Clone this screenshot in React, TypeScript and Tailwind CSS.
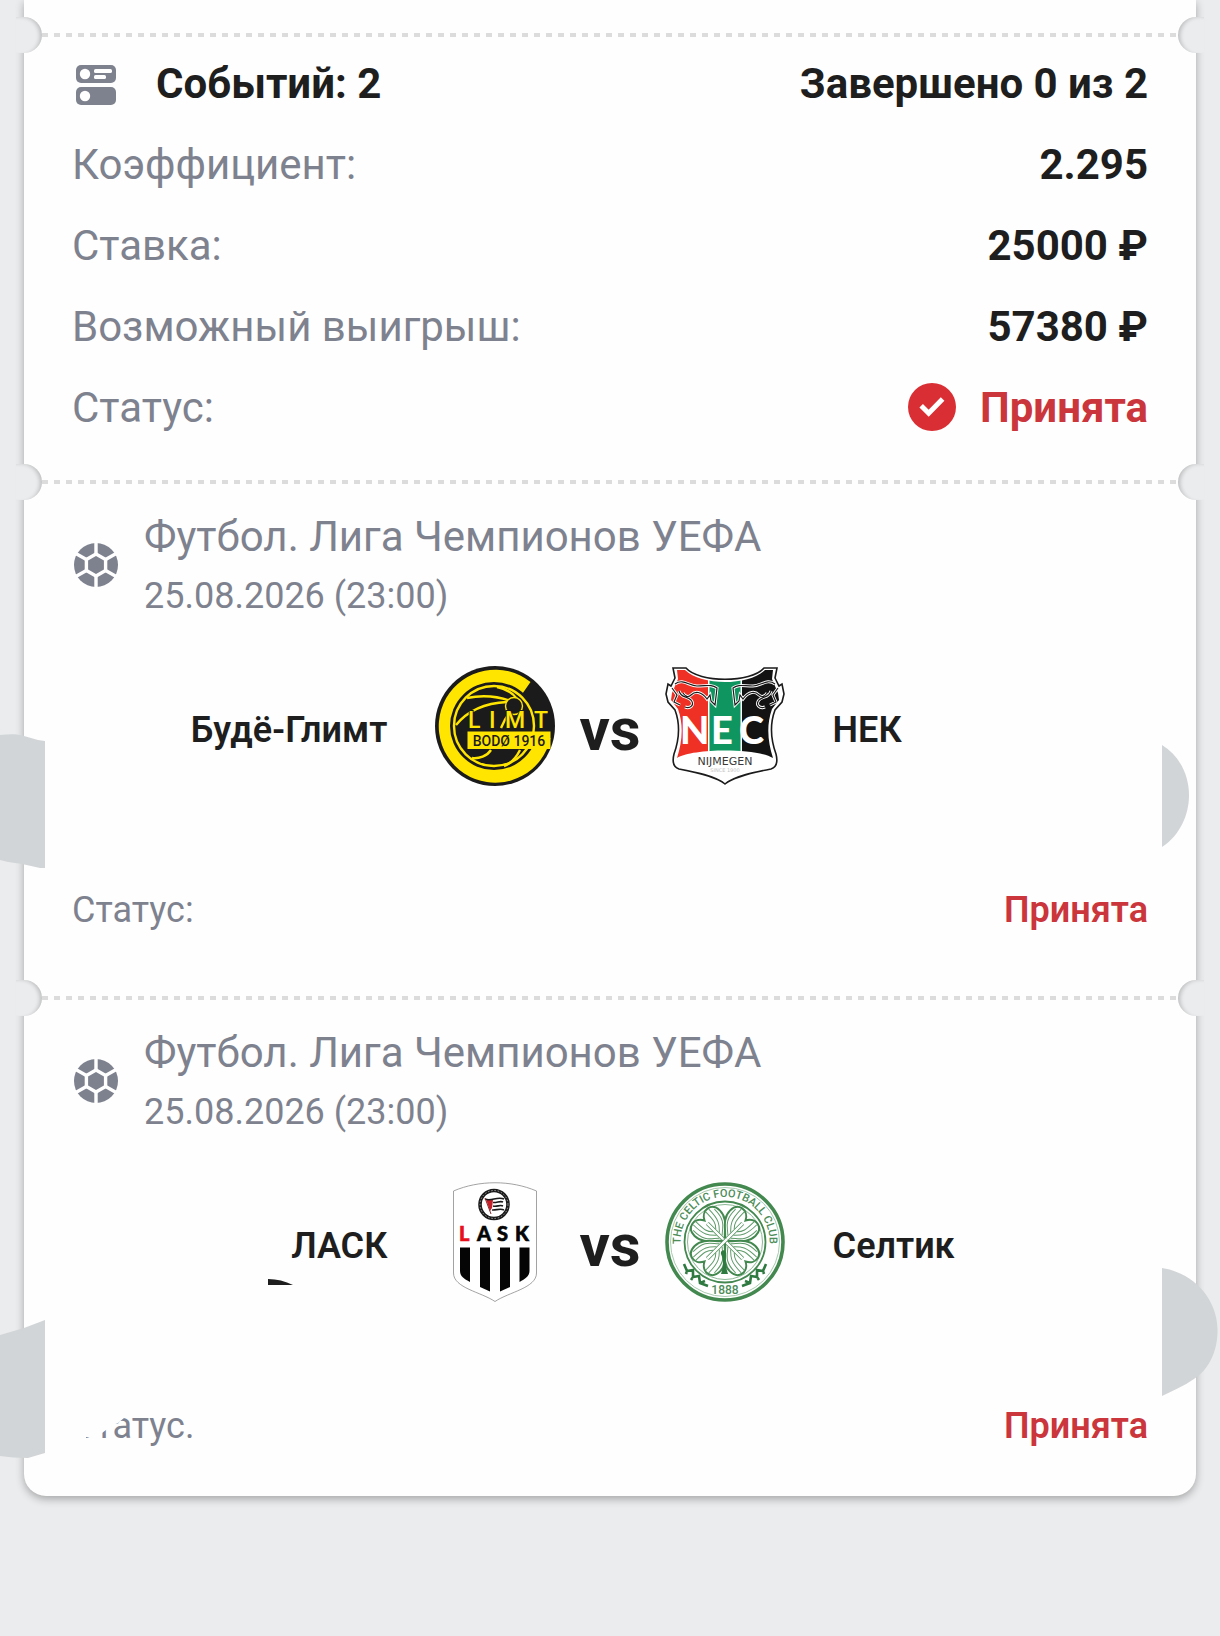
import type { ReactNode } from "react";

const summaryRows = [
  { label: "Коэффициент:", value: "2.295" },
  { label: "Ставка:", value: "25000 ₽" },
  { label: "Возможный выигрыш:", value: "57380 ₽" },
];

function EventsIcon() {
  return (
    <svg viewBox="0 0 48 48" className="h-12 w-12 shrink-0" aria-hidden="true">
      <rect x="4" y="5" width="40" height="18" rx="5" fill="#7e828f" />
      <rect x="4" y="27" width="40" height="18" rx="5" fill="#7e828f" />
      <circle cx="13" cy="14" r="5.2" fill="#fff" />
      <circle cx="13" cy="36" r="5.2" fill="#fff" />
      <rect x="22" y="9" width="18" height="4" rx="1.6" fill="#fff" />
      <rect x="22" y="15" width="12" height="4" rx="1.6" fill="#fff" />
    </svg>
  );
}

function BallIcon() {
  return (
    <svg viewBox="0 0 48 48" className="h-12 w-12 shrink-0" aria-hidden="true">
      <circle cx="24" cy="24" r="22" fill="#7e828f" />
      <g fill="none" stroke="#fff" strokeWidth="3.4">
        <path d="M24 13 L33.6 18.5 V29.5 L24 35 L14.4 29.5 V18.5 Z" />
        <path d="M24 0 V13 M24 35 V48 M33.6 18.5 L46 11.4 M33.6 29.5 L46 36.6 M14.4 18.5 L2 11.4 M14.4 29.5 L2 36.6" />
      </g>
    </svg>
  );
}

function AcceptedIcon() {
  return (
    <svg viewBox="0 0 48 48" className="h-12 w-12 shrink-0" aria-hidden="true">
      <circle cx="24" cy="24" r="24" fill="#d92f34" />
      <path d="M13.2 22.8 L20.7 30.3 L34.6 16" fill="none" stroke="#fff" strokeWidth="5" />
    </svg>
  );
}

function BodoLogo() {
  return (
    <svg viewBox="0 0 120 120" className="h-[120px] w-[120px]" role="img" aria-label="Bodø/Glimt">
      <circle cx="60" cy="60" r="60" fill="#1c1b1c" />
      <path d="M95.5 16 A56.5 56.5 0 1 0 115.5 72 L98 72 A40 40 0 1 1 87.5 27.5 Z" fill="#ffe500" />
      <circle cx="59" cy="60" r="44" fill="#1c1b1c" />
      <g fill="none" stroke="#ffe500" strokeWidth="2.4">
        <circle cx="59" cy="60" r="40" />
        <path d="M32 32 C46 29 62 30 76 35" />
        <path d="M21 59 C34 43 52 37 72 36" />
        <path d="M62 21 C72 23 78 27 82 33" />
        <path d="M85 84 C80 94 75 98 69 100" />
        <path d="M56 84 C52 90 44 93 37 92" />
        <path d="M66 62 C69 55 72 50 75 46" />
      </g>
      <path d="M82 46 C90 50 96 58 97 66 H84 Z" fill="#1c1b1c" />
      <circle cx="79" cy="40" r="8.5" fill="#1c1b1c" stroke="#ffe500" strokeWidth="1.4" />
      <rect x="32.5" y="65.5" width="83" height="17.5" fill="#ffe500" />
      <g
        fill="#ffe500"
        stroke="#1c1b1c"
        strokeWidth="2"
        paintOrder="stroke"
        fontFamily="Roboto, sans-serif"
        fontWeight="500"
        fontSize="23"
      >
        <text x="33" y="62">L</text>
        <text x="54" y="62">I</text>
        <text x="70" y="62">M</text>
        <text x="99" y="62">T</text>
      </g>
      <text x="74" y="80" textAnchor="middle" fill="#1c1b1c" fontFamily="Roboto, sans-serif" fontWeight="500" fontSize="14">
        BODØ 1916
      </text>
    </svg>
  );
}

const necOutline =
  "M8 2 L21 2 C34 17 86 17 99 2 L112 2 L110 12 L114 20 L117 18 L119 28 L117 36 L110 44 C104 60 106 74 111 88 C113 96 112 101 106 103 C90 106 70 110 60 118 C50 110 30 106 14 103 C8 101 7 96 9 88 C14 74 16 60 10 44 L3 36 L1 28 L3 18 L6 20 L10 12 Z";
const necEagle =
  "M10 18 C18 12 24 20 32 20 C42 20 46 18 52 22 L50 39 L46 35 L45 29 L42 33 C36 25 30 25 26 29 C23 32 20 30 18 27 M14 25 C16 32 22 30 26 34 C30 39 25 43 20 41 M7 22 L12 29 L9 36 L15 39";

function NecLogo() {
  return (
    <svg viewBox="0 0 120 120" className="h-[120px] w-[120px]" role="img" aria-label="NEC Nijmegen">
      <clipPath id="nec-field">
        <path d="M12 4 L20 4 C36 20 84 20 100 4 L108 4 L107 13 L113 27 L114 34 L107 43 C101 60 103 76 108 92 C92 82 28 82 12 92 C17 76 19 60 13 43 L6 34 L7 27 L13 13 Z" />
      </clipPath>
      <path d={necOutline} fill="#fff" stroke="#1c1b1c" strokeWidth="1.6" />
      <g clipPath="url(#nec-field)">
        <rect x="0" y="0" width="43" height="100" fill="#ee3124" />
        <rect x="44.5" y="0" width="31" height="100" fill="#0f9660" />
        <rect x="77" y="0" width="43" height="100" fill="#141313" />
      </g>
      {["translate(0 0)", "translate(120 0) scale(-1 1)"].map((transform) => (
        <g key={transform} transform={transform} fill="none">
          <path d={necEagle} stroke="#fff" strokeWidth="3" />
          <path d={necEagle} stroke="#1c1b1c" strokeWidth="1.2" />
        </g>
      ))}
      <g fill="#fff" fontFamily="Lato, sans-serif" fontWeight="900" fontSize="38">
        <text x="15" y="78">N</text>
        <text x="46" y="78">E</text>
        <text x="74" y="78">C</text>
      </g>
      <text x="60" y="99" textAnchor="middle" fill="#3a3939" fontFamily="DejaVu Sans, sans-serif" fontWeight="400" fontSize="11">
        NIJMEGEN
      </text>
      <text x="60" y="106" textAnchor="middle" fill="#c4c4c4" fontFamily="DejaVu Sans, sans-serif" fontWeight="400" fontSize="5">
        SINCE 1900
      </text>
    </svg>
  );
}

function LaskLogo() {
  return (
    <svg viewBox="0 0 120 120" className="h-[120px] w-[120px]" role="img" aria-label="LASK">
      <path
        d="M18.5 9 C44 -2 76 -2 101.5 9 V91 C101.5 106 74 110 60 119.5 C46 110 18.5 106 18.5 91 Z"
        fill="#fff"
        stroke="#8c8c8c"
        strokeWidth="0.8"
      />
      <circle cx="59" cy="22.5" r="14" fill="#fff" stroke="#1a1a1a" strokeWidth="3.6" />
      <circle cx="59" cy="22.5" r="14" fill="none" stroke="#bbb" strokeWidth="0.8" strokeDasharray="1.5 1.8" />
      <path d="M51 17 L58 18 L57 26 L55 29 Z" fill="#c8202b" />
      <path
        d="M50 17 C56 20 62 14 69 17 M58 20.5 C62 21 65 18.5 68 20 M58 24 C62 25 65 22.5 68 24 M57 28 C61 28.5 65 26 69 28"
        fill="none"
        stroke="#1a1a1a"
        strokeWidth="1.6"
      />
      <path d="M50 16 L56 32" stroke="#8a2a2a" strokeWidth="1" />
      <g fontFamily="Lato, sans-serif" fontWeight="900" fontSize="20" fill="#050505" stroke="#050505" strokeWidth="0.6">
        <text x="24" y="59" fill="#e8111b" stroke="#e8111b">L</text>
        <text x="42" y="59">A</text>
        <text x="62" y="59">S</text>
        <text x="80" y="59">K</text>
      </g>
      <g fill="#050505">
        <path d="M25 65.5 H35 V100 C29 97 25 94 25 89 Z" />
        <path d="M45 65.5 H55 V109.5 L45 105 Z" />
        <path d="M65 65.5 H75 V105 L65 109.5 Z" />
        <path d="M84.5 65.5 H94.5 V89 C94.5 94 90 97 84.5 100 Z" />
      </g>
    </svg>
  );
}

const celticLeaf = "M0 0 C-6 -8 -18 -13 -18 -25 C-18 -37 -5 -39 0 -29 C5 -39 18 -37 18 -25 C18 -13 6 -8 0 0 Z";

function CelticLogo() {
  return (
    <svg viewBox="0 0 120 120" className="h-[120px] w-[120px]" role="img" aria-label="Celtic">
      <clipPath id="celtic-leaf">
        <path d={celticLeaf} />
      </clipPath>
      <path id="celtic-ring" d="M16 66 A44.5 44.5 0 1 1 104 66" fill="none" />
      <circle cx="60" cy="60" r="58" fill="#fff" stroke="#43884f" strokeWidth="3.6" />
      <circle cx="60" cy="60" r="54.5" fill="none" stroke="#a8cbaf" strokeWidth="1" />
      <circle cx="60" cy="60" r="40.5" fill="#fff" stroke="#43884f" strokeWidth="1.8" />
      <circle cx="60" cy="60" r="37.5" fill="none" stroke="#8bb994" strokeWidth="1" />
      <text fill="#4c8d58" fontFamily="Roboto, sans-serif" fontWeight="500" fontSize="11">
        <textPath href="#celtic-ring" startOffset="50%" textAnchor="middle">
          THE CELTIC FOOTBALL CLUB
        </textPath>
      </text>
      {[-45, 45, 135, 225].map((angle) => (
        <g key={angle} transform={`translate(60 59) rotate(${angle})`}>
          <path d={celticLeaf} fill="#fff" stroke="#43884f" strokeWidth="2" />
          <g clipPath="url(#celtic-leaf)" fill="none" stroke="#5f9b6a" strokeWidth="1">
            <path d="M-2 -6 C-8 -12 -15 -13 -15 -30 M-2 -10 C-7 -15 -11 -18 -11 -34 M-2 -15 C-6 -19 -7 -22 -7 -35" />
            <path d="M2 -6 C8 -12 15 -13 15 -30 M2 -10 C7 -15 11 -18 11 -34 M2 -15 C6 -19 7 -22 7 -35" />
          </g>
          <path d="M0 3 V-25" stroke="#43884f" strokeWidth="4" />
          <path d="M0 3 V-25" stroke="#fff" strokeWidth="2.6" />
        </g>
      ))}
      <path d="M56 72 C55 67 62 67 61 72 C60 79 61 86 63 92 H56 C58 86 59 79 56 72 Z" fill="#2f7a40" />
      <g fill="none" stroke="#2f7a40" strokeWidth="2.6">
        <path d="M19 82 L22 89 L28 88 L28 95 L34 94 L35 101 L43 104 M22 89 L21 92 M28 95 L26 98 M35 101 L40 99" />
        <path d="M101 82 L98 89 L92 88 L92 95 L86 94 L85 101 L77 104 M98 89 L99 92 M92 95 L94 98 M85 101 L80 99" />
      </g>
      <text x="60" y="112" textAnchor="middle" fill="#4c8d58" fontFamily="Roboto, sans-serif" fontWeight="500" fontSize="12">
        1888
      </text>
    </svg>
  );
}

function Perforation() {
  return (
    <div className="relative px-[18px]">
      <div className="h-1 bg-[repeating-linear-gradient(90deg,#dcdcdc_0_6px,transparent_6px_12px)]" />
      <span className="absolute -left-2 -top-4 h-9 w-[26px] rounded-r-full bg-[#ebeced] shadow-[inset_-4px_1px_4px_-2px_rgba(0,0,0,0.2)]" />
      <span className="absolute -right-2 -top-4 h-9 w-[26px] rounded-l-full bg-[#ebeced] shadow-[inset_4px_1px_4px_-2px_rgba(0,0,0,0.2)]" />
    </div>
  );
}

type MatchProps = {
  home: string;
  away: string;
  homeLogo: ReactNode;
  awayLogo: ReactNode;
  status: ReactNode;
  children: ReactNode;
};

function Match({ home, away, homeLogo, awayLogo, status, children }: MatchProps) {
  return (
    <section className="relative">
      <Perforation />
      <div className="px-12 pt-7">
        <header className="flex items-center gap-6 text-[#7e828f]">
          <BallIcon />
          <div>
            <h2 className="text-[42px] leading-[49px]">Футбол. Лига Чемпионов УЕФА</h2>
            <p className="mt-[14px] text-[36px] leading-[42px]">25.08.2026 (23:00)</p>
          </div>
        </header>

        <div className="mt-[49px] grid grid-cols-[1fr_auto_1fr] items-center text-[36px] font-semibold text-[#1f1e1e]">
          <div className="flex items-center justify-end gap-12">
            <span className="pt-2">{home}</span>
            {homeLogo}
          </div>
          <span className="px-6 pt-2 text-[60px] font-bold leading-[72px]">vs</span>
          <div className="flex items-center gap-12">
            {awayLogo}
            <span className="pt-2">{away}</span>
          </div>
        </div>

        <div className="mt-[103px] flex justify-between text-[36px] leading-[42px]">
          {status}
          <span className="font-semibold text-[#cb363c]">Принята</span>
        </div>
      </div>
      {children}
    </section>
  );
}

export default function App() {
  return (
    <main className="min-h-screen bg-[#ebeced] px-6 pb-[138px] font-['Roboto',sans-serif]">
      <article className="rounded-b-[22px] bg-[#fefefe] pt-[33px] shadow-[0_3px_8px_rgba(0,0,0,0.3)]">
        <Perforation />
        <section className="flex flex-col gap-8 px-12 pb-12 pt-[22px] text-[42px] leading-[49px]">
          <div className="flex justify-between font-bold text-[#1f1e1e]">
            <div className="flex items-center gap-9">
              <EventsIcon />
              <span>Событий: 2</span>
            </div>
            <span>Завершено 0 из 2</span>
          </div>
          {summaryRows.map((row) => (
            <div key={row.label} className="flex justify-between">
              <span className="text-[#7e828f]">{row.label}</span>
              <span className="font-bold text-[#1f1e1e]">{row.value}</span>
            </div>
          ))}
          <div className="flex justify-between">
            <span className="text-[#7e828f]">Статус:</span>
            <span className="flex items-start gap-6 font-bold text-[#cb363c]">
              <AcceptedIcon />
              Принята
            </span>
          </div>
        </section>

        <div className="pb-[65px]">
          <Match
            home="Будё-Глимт"
            away="НЕК"
            homeLogo={<BodoLogo />}
            awayLogo={<NecLogo />}
            status={<span className="text-[#7e828f]">Статус:</span>}
          >
            <svg viewBox="0 0 45 134" className="absolute -left-6 top-[254px] w-[45px]" aria-hidden="true">
              <path d="M0 1 C10 0 18 0 24 2 L38 6 L45 7 V134 L40 134 L22 130 L8 128 L0 126 Z" fill="#d2d5d7" />
            </svg>
            <svg viewBox="0 0 27 102" className="absolute right-[7px] top-[265px] w-[27px]" aria-hidden="true">
              <path d="M0 0 C36 22 36 78 0 102 Z" fill="#d2d5d7" />
            </svg>
          </Match>
        </div>

        <div className="pb-[49px]">
          <Match
            home="ЛАСК"
            away="Селтик"
            homeLogo={<LaskLogo />}
            awayLogo={<CelticLogo />}
            status={
              <span className="relative text-[#7e828f]">
                Статус.
                <svg viewBox="0 0 60 42" className="absolute left-0 top-0 h-[42px] w-[60px]" aria-hidden="true">
                  <path d="M0 0 H58 L52 13 L46 18 L41 20 L34 25 L30 28 V42 H20 L18 32 H14 V42 H0 Z" fill="#fefefe" />
                </svg>
              </span>
            }
          >
            <svg viewBox="0 0 45 138" className="absolute -left-6 top-[324px] w-[45px]" aria-hidden="true">
              <path d="M0 15 L24 8 L45 0 V133 L28 138 C18 138 8 137 0 136 Z" fill="#d2d5d7" />
            </svg>
            <svg viewBox="0 0 56 128" className="absolute -right-[22px] top-[272px] w-[56px]" aria-hidden="true">
              <path d="M0 0 C32 5 55 31 55.5 61 C56 84 46 102 32 111 C22 118 10 123 0 128 Z" fill="#d2d5d7" />
            </svg>
            <svg viewBox="0 0 25 6" className="absolute left-[244px] top-[283px] w-[25px]" aria-hidden="true">
              <path d="M0 0 C9 0 17 2 25 6 H0 Z" fill="#1f1e1e" />
            </svg>
          </Match>
        </div>
      </article>
    </main>
  );
}
